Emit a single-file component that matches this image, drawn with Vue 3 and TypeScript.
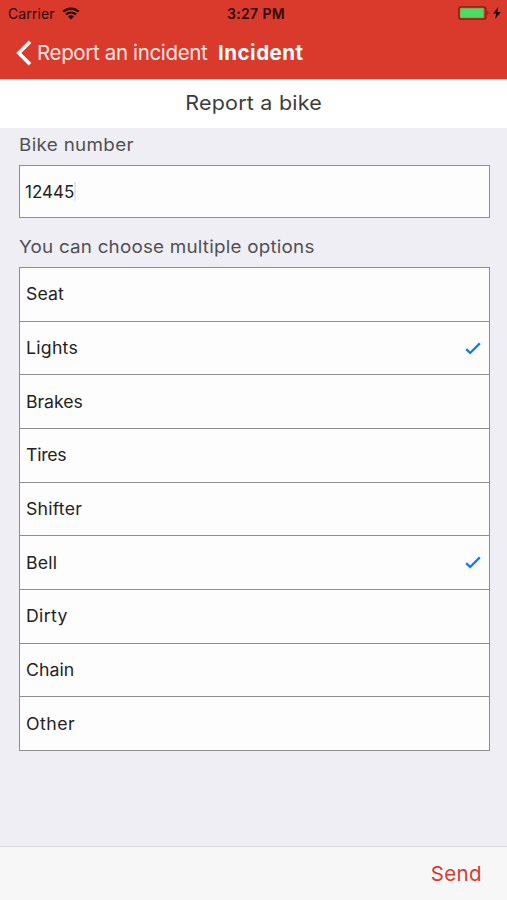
<script setup lang="ts">
import { ref } from 'vue'

interface Option {
  label: string
  selected: boolean
  tracking: number
}

const bikeNumber = ref('12445')

const options = ref<Option[]>([
  { label: 'Seat', selected: false, tracking: 0.05 },
  { label: 'Lights', selected: true, tracking: 0.25 },
  { label: 'Brakes', selected: false, tracking: -0.05 },
  { label: 'Tires', selected: false, tracking: -0.25 },
  { label: 'Shifter', selected: false, tracking: 0.2 },
  { label: 'Bell', selected: true, tracking: 0.15 },
  { label: 'Dirty', selected: false, tracking: 0.35 },
  { label: 'Chain', selected: false, tracking: 0.05 },
  { label: 'Other', selected: false, tracking: 0.45 },
])

function toggle(option: Option): void {
  option.selected = !option.selected
}
</script>

<template>
  <div class="screen">
    <header class="top">
      <div class="status">
        <div class="carrier">
          <span>Carrier</span>
          <svg class="wifi" viewBox="0 0 18 13" aria-hidden="true">
            <path d="M1.3 4.6C5.7 .5 12.3 .5 16.7 4.6" />
            <path d="M4 7.5c2.9-2.6 7.1-2.6 10 0" />
            <path class="dot" d="M9 12.4 6.1 9.4c1.7-1.5 4.1-1.5 5.8 0z" />
          </svg>
        </div>
        <span class="time">3:27 PM</span>
        <div class="power">
          <svg class="battery" viewBox="0 0 32 14" aria-hidden="true">
            <rect class="shell" x=".9" y=".9" width="27" height="12.2" rx="2.4" />
            <rect class="charge" x="2.2" y="2.2" width="23.4" height="9.6" rx=".5" />
            <path class="cap" d="M29.3 5c1.6.5 1.6 3.5 0 4z" />
          </svg>
          <svg class="bolt" viewBox="0 0 8 12" aria-hidden="true">
            <path d="M5.3 0 .2 6.5h3L2.2 12 7.8 5H4.5z" />
          </svg>
        </div>
      </div>
      <nav class="nav">
        <svg class="chevron" viewBox="0 0 16 26" aria-hidden="true">
          <path d="M14 1.8 2.8 13 14 24.2" />
        </svg>
        <span class="back">Report an incident</span>
        <span class="title">Incident</span>
      </nav>
    </header>

    <div class="heading"><span class="wide">Report a bike</span></div>

    <main class="form">
      <div class="label number-label"><span class="wide">Bike number</span></div>
      <div class="field"><span>{{ bikeNumber }}</span><i class="caret"></i></div>
      <div class="label options-label"><span class="wide">You can choose multiple options</span></div>
      <ul class="options">
        <li v-for="option in options" :key="option.label" class="option" @click="toggle(option)">
          <span class="name" :style="{ letterSpacing: option.tracking + 'px' }">{{ option.label }}</span>
          <svg v-if="option.selected" class="check" viewBox="0 0 16 13" aria-hidden="true">
            <path d="M1.2 7.1 5.2 11 14.8 1.4" />
          </svg>
        </li>
      </ul>
    </main>

    <footer class="toolbar"><span class="send">Send</span></footer>
  </div>
</template>

<style>
body {
  margin: 0;
  background: #efeef4;
}
</style>

<style scoped>
.screen {
  box-sizing: border-box;
  display: flex;
  flex-direction: column;
  width: 507px;
  height: 900px;
  overflow: hidden;
  background: #efeef4;
  color: #222;
  font-family: Inter, "Liberation Sans", sans-serif;
  white-space: nowrap;
}
.top {
  height: 79px;
  background: #d93a2b;
  border-bottom: 1px solid #f9d4ce;
}
.status {
  display: grid;
  grid-template-columns: 1fr auto 1fr;
  align-items: center;
  height: 26px;
  padding: 0 6px 0 8px;
  color: #2b0704;
  font-size: 14px;
}
.carrier {
  display: flex;
  align-items: center;
  gap: 7px;
  letter-spacing: 0.1px;
}
.wifi {
  width: 18px;
  height: 13px;
  fill: none;
  stroke: #240503;
  stroke-width: 2.3;
}
.wifi .dot {
  fill: #240503;
  stroke: none;
}
.time {
  padding-left: 3px;
  font-weight: 600;
  letter-spacing: 0.35px;
}
.power {
  display: flex;
  justify-content: flex-end;
  align-items: center;
  gap: 3px;
}
.battery {
  width: 32px;
  height: 14px;
}
.shell {
  fill: none;
  stroke: #84200f;
  stroke-width: 1.4;
}
.charge {
  fill: #4cdb64;
}
.cap {
  fill: #84200f;
}
.bolt {
  width: 8px;
  height: 12px;
  fill: #1d0402;
}
.nav {
  box-sizing: border-box;
  display: flex;
  align-items: center;
  height: 53px;
  padding-left: 16px;
  color: #fff;
  font-size: 20.5px;
}
.chevron {
  flex: none;
  width: 16px;
  height: 26px;
  margin-right: 5px;
  fill: none;
  stroke: #fff;
  stroke-width: 3.6;
}
.back {
  width: 181px;
  color: #ffe9e5;
  letter-spacing: -0.35px;
}
.title {
  font-weight: 700;
  letter-spacing: 0.5px;
}
.wide {
  display: inline-block;
  transform: scaleX(1.075);
  transform-origin: left;
}
.heading {
  height: 48px;
  background: #fff;
  color: #3c3c3e;
  font-size: 20px;
  letter-spacing: 0.2px;
  line-height: 46px;
  text-align: center;
}
.heading .wide {
  transform-origin: center;
}
.form {
  flex: 1;
  padding: 0 17px 0 19px;
}
.label {
  color: #505054;
  font-size: 17.5px;
  line-height: 22px;
}
.number-label {
  padding: 6px 0 9px;
  letter-spacing: 0.3px;
}
.field {
  box-sizing: border-box;
  display: flex;
  align-items: center;
  height: 53px;
  padding-left: 5px;
  border: 1px solid #8e8e90;
  background: #fdfdfd;
  font-size: 17px;
}
.caret {
  width: 2px;
  height: 19px;
  background: #dfe9fb;
}
.options-label {
  padding: 18px 0 9px;
  letter-spacing: 0.2px;
}
.options {
  box-sizing: border-box;
  display: flex;
  flex-direction: column;
  height: 484px;
  margin: 0;
  padding: 0;
  border: 1px solid #8e8e90;
  background: #fdfdfd;
  list-style: none;
}
.option {
  box-sizing: border-box;
  display: flex;
  flex: 1;
  align-items: center;
  justify-content: space-between;
  padding: 0 8px 0 5.5px;
  font-size: 17px;
}
.option + .option {
  border-top: 1px solid #8e8e90;
}
.name {
  transform: scaleX(1.04);
  transform-origin: left;
}
.check {
  width: 16px;
  height: 13px;
  fill: none;
  stroke: #1478f0;
  stroke-width: 2.3;
}
.toolbar {
  box-sizing: border-box;
  display: flex;
  justify-content: flex-end;
  height: 54px;
  padding-right: 25px;
  border-top: 1px solid #d9d8dc;
  background: #f7f7f8;
}
.send {
  color: #d93a2b;
  font-size: 20.5px;
  letter-spacing: 0.4px;
  line-height: 53px;
}
</style>
